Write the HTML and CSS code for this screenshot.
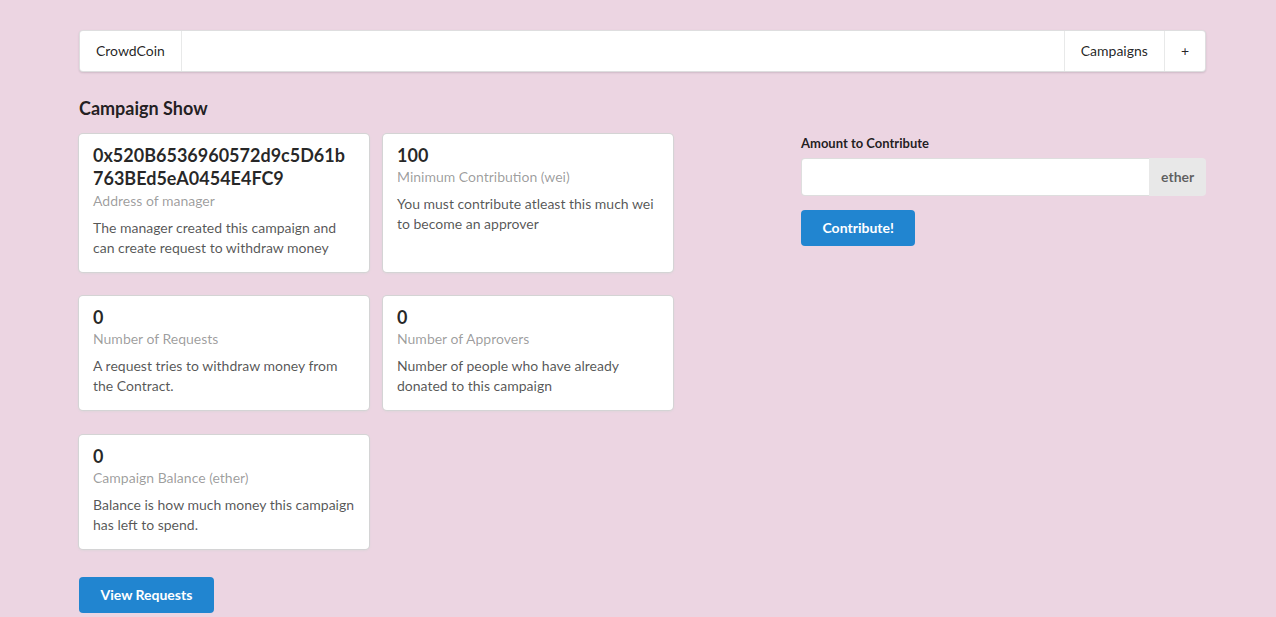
FILE: index.html
```html
<!DOCTYPE html>
<html>
<head>
<meta charset="utf-8">
<title>CrowdCoin</title>
<link rel="stylesheet" href="styles.css">
</head>
<body>
<div class="container">
  <nav class="menu">
    <a class="item">CrowdCoin</a>
    <div class="menu-right">
      <a class="item divided">Campaigns</a>
      <a class="item divided">+</a>
    </div>
  </nav>

  <h3 class="title">Campaign Show</h3>

  <div class="layout">
    <div class="left-col">
      <div class="cards">
        <div class="card">
          <div class="header addr">0x520B6536960572d9c5D61b763BEd5eA0454E4FC9</div>
          <div class="meta">Address of manager</div>
          <div class="description">The manager created this campaign and can create request to withdraw money</div>
        </div>
        <div class="card">
          <div class="header">100</div>
          <div class="meta">Minimum Contribution (wei)</div>
          <div class="description">You must contribute atleast this much wei to become an approver</div>
        </div>
        <div class="card">
          <div class="header">0</div>
          <div class="meta">Number of Requests</div>
          <div class="description">A request tries to withdraw money from the Contract.</div>
        </div>
        <div class="card">
          <div class="header">0</div>
          <div class="meta">Number of Approvers</div>
          <div class="description">Number of people who have already donated to this campaign</div>
        </div>
        <div class="card">
          <div class="header">0</div>
          <div class="meta">Campaign Balance (ether)</div>
          <div class="description">Balance is how much money this campaign has left to spend.</div>
        </div>
      </div>
      <button class="btn primary view-btn">View Requests</button>
    </div>

    <div class="right-col">
      <form class="form">
        <div class="field">
          <label class="field-label">Amount to Contribute</label>
          <div class="labeled-input">
            <input type="text">
            <div class="input-label">ether</div>
          </div>
        </div>
        <button type="button" class="btn primary">Contribute!</button>
      </form>
    </div>
  </div>
</div>
</body>
</html>
```

FILE: styles.css
```css
* { box-sizing: border-box; }

html, body {
  margin: 0;
  padding: 0;
}

body {
  background: #ecd5e2;
  font-family: Lato, "Helvetica Neue", Arial, sans-serif;
  font-size: 14px;
  line-height: 1.4285em;
  color: rgba(0, 0, 0, 0.87);
}

.container {
  width: 1127px;
  margin-left: 79px;
  padding-top: 30px;
}

/* Menu */
.menu {
  display: flex;
  background: #fff;
  border: 1px solid rgba(34, 36, 38, 0.15);
  border-radius: 4px;
  box-shadow: 0 1px 2px 0 rgba(34, 36, 38, 0.15);
  min-height: 42px;
}

.menu .item {
  position: relative;
  display: flex;
  align-items: center;
  padding: 13px 16px;
  line-height: 1;
  color: rgba(0, 0, 0, 0.87);
  cursor: pointer;
}

.menu > .item {
  border-right: 1px solid rgba(34, 36, 38, 0.1);
}

.menu-right {
  display: flex;
  margin-left: auto;
}

.menu .item.divided {
  border-left: 1px solid rgba(34, 36, 38, 0.1);
}

/* Title */
.title {
  font-size: 18px;
  font-weight: 700;
  line-height: 1.28571em;
  margin: 25px 0 14px;
  color: rgba(0, 0, 0, 0.87);
}

/* Layout */
.layout {
  display: flex;
  align-items: flex-start;
}

.left-col {
  width: 694px;
}

.right-col {
  width: 405px;
  margin-left: 28px;
}

/* Cards */
.cards {
  display: grid;
  grid-template-columns: 290px 290px;
  column-gap: 14px;
  row-gap: 24.5px;
}

.card {
  background: #fff;
  border-radius: 4px;
  box-shadow: 0 1px 3px 0 #d4d4d5, 0 0 0 1px #d4d4d5;
  padding: 14px;
}

.card .header {
  font-size: 18px;
  font-weight: 700;
  line-height: 1.28571em;
  margin-top: -3.86px;
  color: rgba(0, 0, 0, 0.85);
}

.card .header.addr {
  overflow-wrap: anywhere;
  word-break: break-all;
}

.card .meta {
  color: rgba(0, 0, 0, 0.4);
}

.card .description {
  margin-top: 7px;
  color: rgba(0, 0, 0, 0.68);
}

/* Buttons */
.btn {
  display: inline-block;
  border: none;
  border-radius: 4px;
  font-family: Lato, "Helvetica Neue", Arial, sans-serif;
  font-size: 14px;
  font-weight: 700;
  line-height: 1em;
  padding: 11px 21.5px;
  cursor: pointer;
}

.btn.primary {
  background: #2185d0;
  color: #fff;
}

.view-btn {
  margin-top: 27.5px;
}

/* Form */
.form {
  margin: 0;
}

.field {
  margin-bottom: 14px;
}

.field-label {
  display: block;
  font-size: 13px;
  font-weight: 700;
  line-height: 1.4285em;
  margin-bottom: 5px;
  color: rgba(0, 0, 0, 0.87);
}

.labeled-input {
  display: flex;
  height: 38px;
}

.labeled-input input {
  flex: 1;
  min-width: 0;
  font-family: Lato, "Helvetica Neue", Arial, sans-serif;
  font-size: 14px;
  padding: 9.5px 14px;
  line-height: 17px;
  border: 1px solid rgba(34, 36, 38, 0.15);
  border-right: none;
  border-radius: 4px 0 0 4px;
  background: #fff;
  outline: none;
}

.input-label {
  display: flex;
  align-items: center;
  background: #e8e8e8;
  color: rgba(0, 0, 0, 0.6);
  font-weight: 700;
  font-size: 14px;
  line-height: 1;
  padding: 0 11.7px;
  border-radius: 0 4px 4px 0;
}
```
